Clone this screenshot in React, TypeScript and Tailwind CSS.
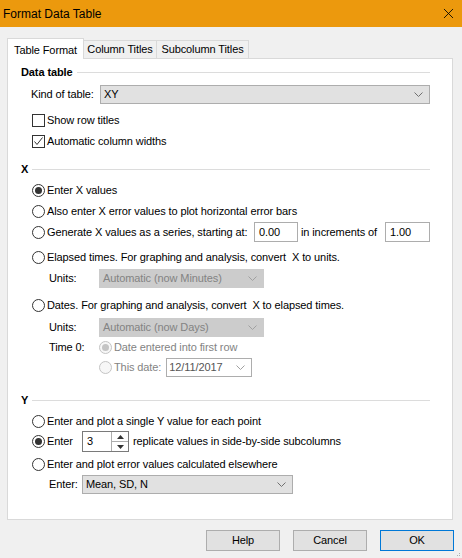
import { X } from "lucide-react";

const Chevron = ({ color = "#606060" }: { color?: string }) => (
  <svg width="9" height="5" viewBox="0 0 9 5" className="shrink-0">
    <path d="M0.5 0.5 L4.5 4.5 L8.5 0.5" fill="none" stroke={color} strokeWidth="1" />
  </svg>
);

const Radio = ({ checked = false, disabled = false }: { checked?: boolean; disabled?: boolean }) => (
  <span
    className={`w-[13px] h-[13px] shrink-0 rounded-full border flex items-center justify-center ${
      disabled ? "border-[#c4c4c4] bg-[#f7f7f7]" : "border-[#333333] bg-white"
    }`}
  >
    {checked && (
      <span className={`w-[7px] h-[7px] rounded-full ${disabled ? "bg-[#c4c4c4]" : "bg-[#333333]"}`} />
    )}
  </span>
);

const Checkbox = ({ checked = false }: { checked?: boolean }) => (
  <span className="w-[13px] h-[13px] shrink-0 border border-[#333333] bg-white flex items-center justify-center">
    {checked && (
      <svg width="11" height="11" viewBox="0 0 11 11">
        <path d="M1.5 5.5 L4 8.5 L9.5 1.5" fill="none" stroke="#333333" strokeWidth="1" />
      </svg>
    )}
  </span>
);

const Heading = ({ children }: { children: React.ReactNode }) => (
  <div className="h-[18px] flex items-center">
    <span className="font-bold">{children}</span>
    <div className="flex-1 h-px bg-[#dcdcdc] ml-[4px]" />
  </div>
);

const Select = ({ text, width, disabled = false }: { text: string; width: string; disabled?: boolean }) => (
  <div
    className={`${width} h-[19px] border flex items-center justify-between pl-[3px] pr-[6px] ${
      disabled ? "bg-[#cccccc] border-[#cccccc] text-[#838383]" : "bg-[#e1e1e1] border-[#adadad]"
    }`}
  >
    <span>{text}</span>
    <Chevron color={disabled ? "#a0a0a0" : "#707070"} />
  </div>
);

const Row = ({ children, className = "" }: { children: React.ReactNode; className?: string }) => (
  <div className={`h-[18px] flex items-center ${className}`}>{children}</div>
);

const Button = ({ label, primary = false }: { label: string; primary?: boolean }) => (
  <div
    className={`w-[74px] h-[21px] bg-[#e1e1e1] border flex items-center justify-center ${
      primary ? "border-[#0078d7]" : "border-[#adadad]"
    }`}
  >
    {label}
  </div>
);

export default function App() {
  return (
    <div className="w-[462px] h-[558px] bg-[#f0f0f0] font-['Liberation_Sans',Arial,sans-serif] text-[11px] text-black tracking-[-0.1px] flex flex-col relative">
      {/* Title bar */}
      <div className="h-[27px] bg-[#ec990d] flex items-center justify-between pl-[3px] pr-[5px] shrink-0">
        <span className="text-[12px] tracking-normal">Format Data Table</span>
        <X className="w-[17px] h-[17px] text-black" strokeWidth={1.2} />
      </div>

      {/* Tabs */}
      <div className="flex items-end pl-[7px] mt-[11px] h-[21px] relative z-10">
        <div className="w-[77px] h-[21px] bg-white border-l border-t border-r border-[#d9d9d9] flex items-start justify-center pt-[3px]">
          Table Format
        </div>
        <div className="w-[73px] h-[18px] mb-px bg-[#f0f0f0] border-t border-r border-[#d9d9d9] flex items-center justify-center">
          Column Titles
        </div>
        <div className="w-[92px] h-[18px] mb-px bg-[#f0f0f0] border-t border-r border-[#d9d9d9] flex items-center justify-center">
          Subcolumn Titles
        </div>
      </div>

      {/* Panel */}
      <div className="ml-[7px] w-[446px] h-[462px] -mt-px bg-white border border-[#d9d9d9] pl-[13px] pt-[4px]">
        <div className="w-[409px] flex flex-col">
          <Heading>Data table</Heading>
          <div className="h-[19px] mt-[4px] flex items-center pl-[10px]">
            <span className="w-[69px]">Kind of table:</span>
            <Select text="XY" width="w-[330px]" />
          </div>
          <Row className="mt-[7px] pl-[11px] gap-[2px]">
            <Checkbox />
            <span>Show row titles</span>
          </Row>
          <Row className="mt-[3px] pl-[11px] gap-[2px]">
            <Checkbox checked />
            <span>Automatic column widths</span>
          </Row>

          <div className="mt-[10px]">
            <Heading>X</Heading>
          </div>
          <Row className="mt-[3px] pl-[11px] gap-[2px]">
            <Radio checked />
            <span>Enter X values</span>
          </Row>
          <Row className="mt-[3px] pl-[11px] gap-[2px]">
            <Radio />
            <span>Also enter X error values to plot horizontal error bars</span>
          </Row>
          <div className="h-[20px] mt-[2px] pl-[11px] flex items-center">
            <Radio />
            <span className="ml-[2px]">Generate X values as a series, starting at:</span>
            <div className="ml-auto flex items-center">
              <div className="w-[44px] h-[20px] border border-[#adadad] bg-white flex items-center pl-[4px]">0.00</div>
              <span className="ml-[3px] mr-[8px]">in increments of</span>
              <div className="w-[45px] h-[20px] border border-[#adadad] bg-white flex items-center pl-[4px]">1.00</div>
            </div>
          </div>
          <Row className="mt-[6px] pl-[11px] gap-[2px]">
            <Radio />
            <span>Elapsed times. For graphing and analysis, convert&nbsp; X to units.</span>
          </Row>
          <div className="h-[19px] mt-[3px] pl-[28px] flex items-center">
            <span className="w-[50px]">Units:</span>
            <Select text="Automatic (now Minutes)" width="w-[165px]" disabled />
          </div>
          <Row className="mt-[8px] pl-[11px] gap-[2px]">
            <Radio />
            <span>Dates. For graphing and analysis, convert&nbsp; X to elapsed times.</span>
          </Row>
          <div className="h-[19px] mt-[4px] pl-[28px] flex items-center">
            <span className="w-[50px]">Units:</span>
            <Select text="Automatic (now Days)" width="w-[165px]" disabled />
          </div>
          <Row className="mt-px pl-[28px]">
            <span className="w-[50px]">Time 0:</span>
            <Radio checked disabled />
            <span className="ml-[2px] text-[#838383]">Date entered into first row</span>
          </Row>
          <div className="h-[19px] mt-[2px] pl-[78px] flex items-center">
            <Radio disabled />
            <span className="ml-[2px] text-[#838383]">This date:</span>
            <div className="ml-[5px] w-[86px] h-[19px] border border-[#adadad] bg-white flex items-center justify-between pl-[2px] pr-[6px] text-[#555555]">
              <span>12/11/2017</span>
              <Chevron color="#a0a0a0" />
            </div>
          </div>

          <div className="mt-[14px]">
            <Heading>Y</Heading>
          </div>
          <Row className="mt-[3px] pl-[11px] gap-[2px]">
            <Radio />
            <span>Enter and plot a single Y value for each point</span>
          </Row>
          <div className="h-[21px] mt-px pl-[11px] flex items-center">
            <Radio checked />
            <span className="ml-[2px] w-[35px]">Enter</span>
            <div className="w-[47px] h-[21px] border border-[#7a7a7a] bg-white flex items-center">
              <span className="flex-1 pl-[4px]">3</span>
              <div className="w-[17px] h-full border-l border-[#adadad] flex flex-col">
                <div className="flex-1 flex items-center justify-center border-b border-[#adadad]">
                  <svg width="7" height="4" viewBox="0 0 7 4">
                    <path d="M0 4 L3.5 0 L7 4 Z" fill="#333333" />
                  </svg>
                </div>
                <div className="flex-1 flex items-center justify-center">
                  <svg width="7" height="4" viewBox="0 0 7 4">
                    <path d="M0 0 L3.5 4 L7 0 Z" fill="#333333" />
                  </svg>
                </div>
              </div>
            </div>
            <span className="ml-[4px]">replicate values in side-by-side subcolumns</span>
          </div>
          <Row className="mt-[3px] pl-[11px] gap-[2px]">
            <Radio />
            <span>Enter and plot error values calculated elsewhere</span>
          </Row>
          <div className="h-[19px] mt-[2px] pl-[28px] flex items-center">
            <span className="w-[33px]">Enter:</span>
            <Select text="Mean, SD, N" width="w-[211px]" />
          </div>
        </div>
      </div>

      {/* Buttons */}
      <div className="flex justify-end gap-[13px] pr-[8px] mt-[10px]">
        <Button label="Help" />
        <Button label="Cancel" />
        <Button label="OK" primary />
      </div>

      {/* resize grip */}
      <div className="absolute right-[2px] bottom-[2px] grid grid-cols-3 gap-[1px]">
        <span />
        <span />
        <span className="w-[1px] h-[1px] bg-[#b0b0b0]" />
        <span />
        <span className="w-[1px] h-[1px] bg-[#b0b0b0]" />
        <span className="w-[1px] h-[1px] bg-[#b0b0b0]" />
      </div>
    </div>
  );
}
